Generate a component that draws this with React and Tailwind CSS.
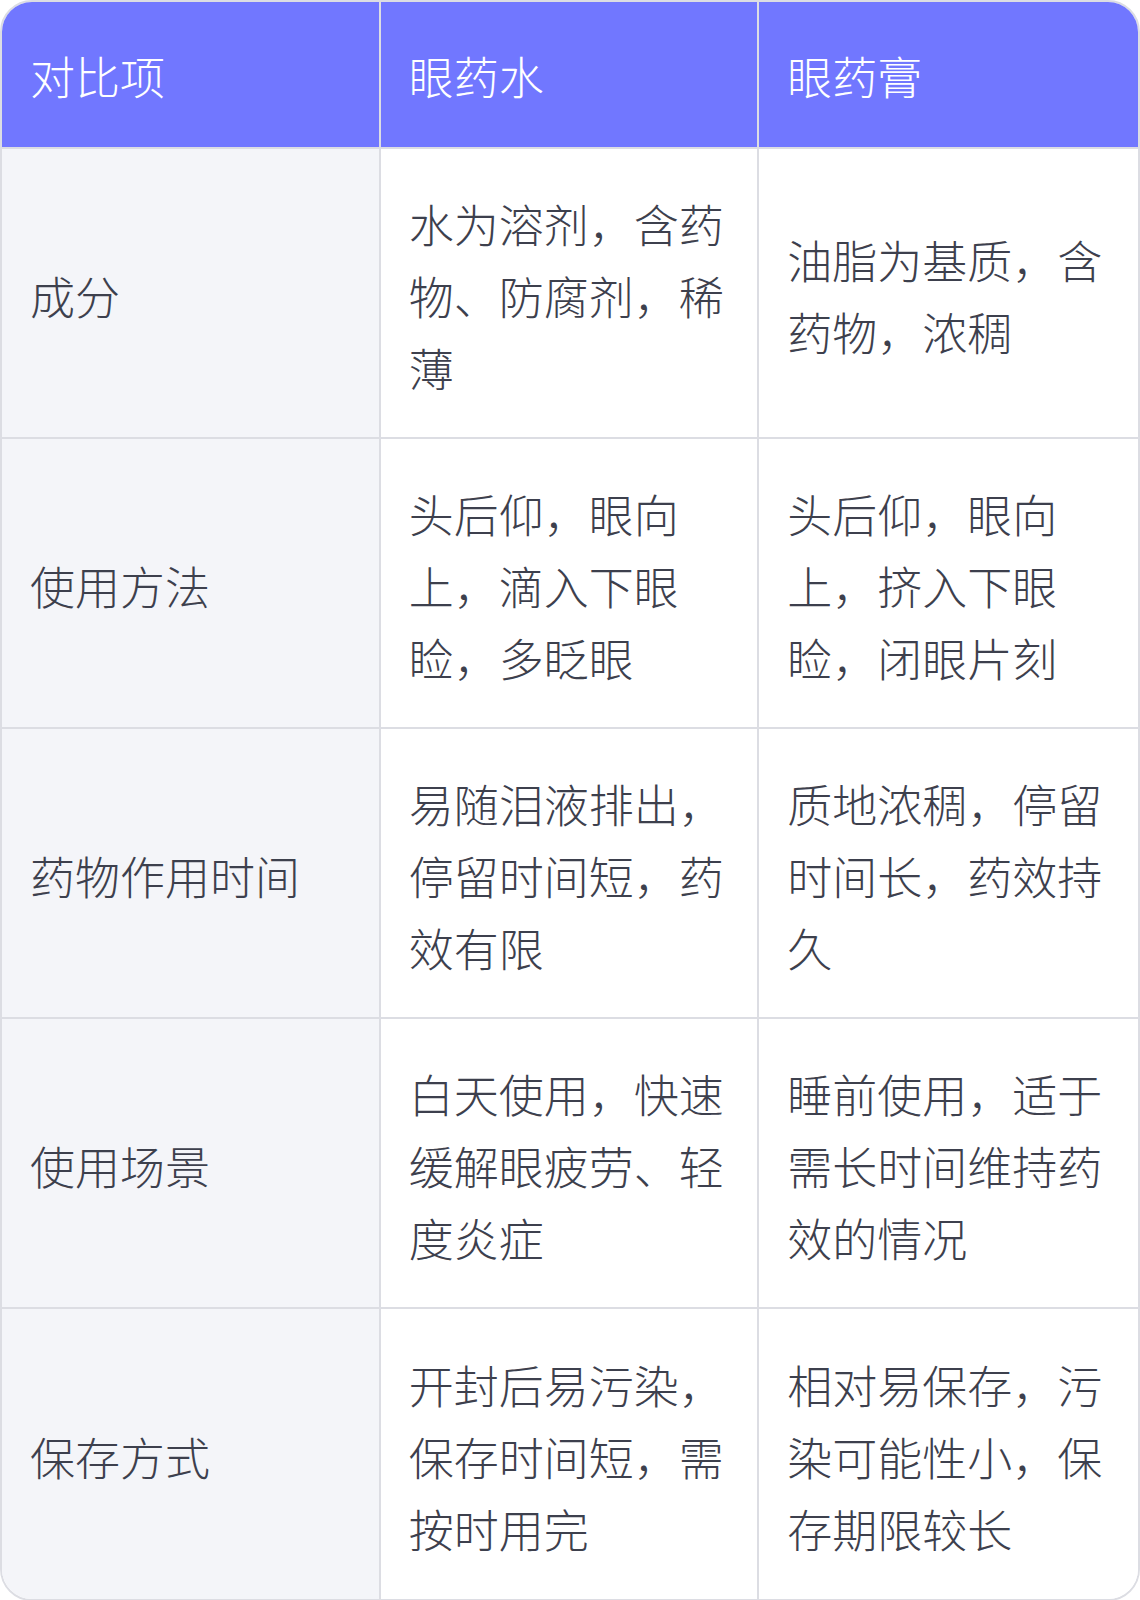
const rows = [
  ['成分', '水为溶剂，含药物、防腐剂，稀薄', '油脂为基质，含药物，浓稠'],
  ['使用方法', '头后仰，眼向上，滴入下眼睑，多眨眼', '头后仰，眼向上，挤入下眼睑，闭眼片刻'],
  ['药物作用时间', '易随泪液排出，停留时间短，药效有限', '质地浓稠，停留时间长，药效持久'],
  ['使用场景', '白天使用，快速缓解眼疲劳、轻度炎症', '睡前使用，适于需长时间维持药效的情况'],
  ['保存方式', '开封后易污染，保存时间短，需按时用完', '相对易保存，污染可能性小，保存期限较长'],
]

const headers = ['对比项', '眼药水', '眼药膏']

export default function App() {
  return (
    <div
      className="w-[1140px] bg-white font-light"
      style={{ fontFamily: '"Noto Sans CJK SC", "Noto Sans", sans-serif' }}
    >
      <div className="overflow-hidden rounded-[32px] border-2 border-[#dcdde3]">
        <div className="grid grid-cols-3 bg-[#7177ff] text-white">
          {headers.map((h, i) => (
            <div
              key={h}
              className={`px-7 pt-[38px] pb-[35px] text-[45px] leading-[72px] border-b-2 border-[#dcdde3] ${i < 2 ? 'border-r-2' : ''}`}
            >
              {h}
            </div>
          ))}
        </div>

        {rows.map((row, ri) => (
          <div key={row[0]} className="grid grid-cols-3 text-[#3d404d]">
            {row.map((cell, ci) => (
              <div
                key={ci}
                className={`flex min-h-[290px] items-center px-7 pt-[39px] pb-[33px] text-[45px] leading-[72px] border-[#dcdde3] ${ci === 0 ? 'bg-[#f4f5f9]' : 'bg-white'} ${ci < 2 ? 'border-r-2' : ''} ${ri < rows.length - 1 ? 'border-b-2' : ''}`}
              >
                <span>{cell}</span>
              </div>
            ))}
          </div>
        ))}
      </div>
    </div>
  )
}
